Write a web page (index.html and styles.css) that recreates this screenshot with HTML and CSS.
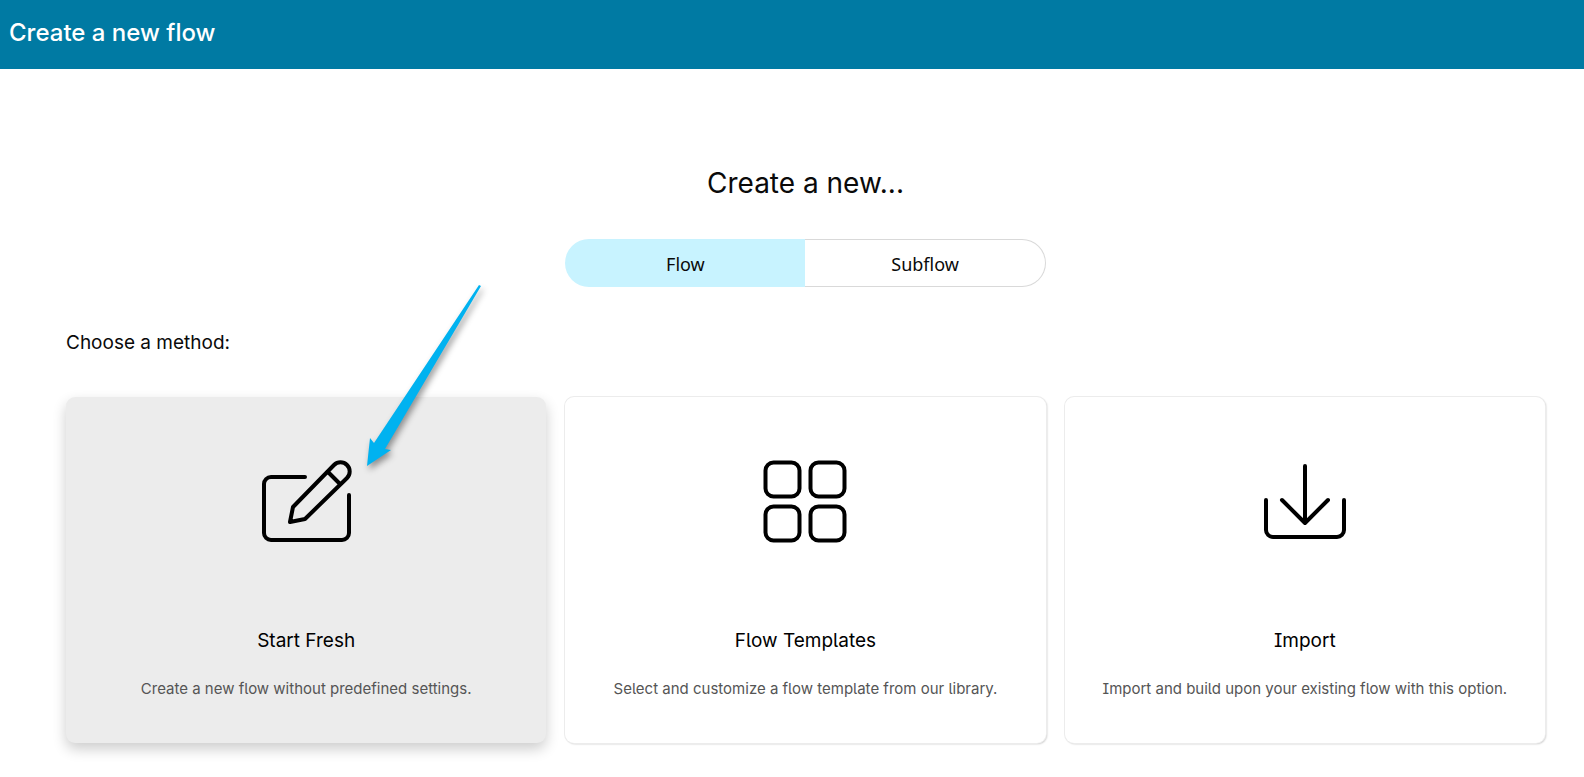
FILE: index.html
```html
<!DOCTYPE html>
<html lang="en">
<head>
<meta charset="utf-8">
<title>Create a new flow</title>
<link rel="stylesheet" href="styles.css">
</head>
<body>
<header class="topbar"><h1 class="topbar-title">Create a new flow</h1></header>
<main class="content">
  <h2 class="heading">Create a new...</h2>
  <div class="segmented" role="group" aria-label="Flow type">
    <button class="segment segment-active" type="button" aria-pressed="true">Flow</button>
    <button class="segment" type="button" aria-pressed="false">Subflow</button>
  </div>
  <p class="prompt">Choose a method:</p>
  <div class="cards">
    <button class="card card-hover" type="button">
      <svg class="icon" viewBox="0 0 96 96" aria-hidden="true">
        <path d="M47 22H13a7 7 0 0 0-7 7V78a7 7 0 0 0 7 7H84a7 7 0 0 0 7-7V40"/>
        <path d="M32 67 35 52 76 10a9 9 0 0 1 13 13L47 64ZM70 17 82 29"/>
      </svg>
      <span class="card-title">Start Fresh</span>
      <span class="card-text">Create a new flow without predefined settings.</span>
      <svg class="pointer" viewBox="0 0 116 184" aria-hidden="true">
        <path d="M114 0 116 1 20 164 26 165 2 181 5 153 9 158Z"/>
      </svg>
    </button>
    <button class="card" type="button">
      <svg class="icon" viewBox="0 0 96 96" aria-hidden="true">
        <rect x="8.500" y="7.500" width="34" height="34" rx="8"/>
        <rect x="53.500" y="7.500" width="34" height="34" rx="8"/>
        <rect x="8.500" y="51.500" width="34" height="34" rx="8"/>
        <rect x="53.500" y="51.500" width="34" height="34" rx="8"/>
      </svg>
      <span class="card-title">Flow Templates</span>
      <span class="card-text">Select and customize a flow template from our library.</span>
    </button>
    <button class="card" type="button">
      <svg class="icon" viewBox="0 0 96 96" aria-hidden="true">
        <path d="M48 11V67M25 45 48 68 71 45M9 45V75a7 7 0 0 0 7 7H80a7 7 0 0 0 7-7V45"/>
      </svg>
      <span class="card-title">Import</span>
      <span class="card-text">Import and build upon your existing flow with this option.</span>
    </button>
  </div>
</main>
</body>
</html>
```
FILE: styles.css
```css
* { box-sizing: border-box; }
body {
  margin: 0;
  background: #fff;
  color: #0a0a0a;
  font-family: Inter, "Liberation Sans", sans-serif;
}
.topbar { background: #007aa3; padding: 17px 9px 20px; }
.topbar-title { margin: 0; color: #fff; font-size: 24px; line-height: 32px; font-weight: 500; }
.content {
  display: flex;
  flex-direction: column;
  padding: 94px 39px 32px 66px;
}
.heading { margin: 0; font-size: 28px; line-height: 40px; font-weight: 400; text-align: center; }
.segmented {
  display: grid;
  grid-template-columns: 1fr 1fr;
  width: calc((100% - 38px) / 3);
  height: 48px;
  margin: 36px auto 0;
}
.segment {
  padding: 2px 0 0;
  border: 1px solid #d9d9d9;
  border-left: 0;
  border-radius: 0 24px 24px 0;
  background: #fff;
  color: #0a0a0a;
  font: 18px/24px "Noto Sans", "Open Sans", sans-serif;
}
.segment-active { border: 0; border-radius: 24px 0 0 24px; background: #c8f3ff; }
.prompt { margin: 42px 0 0; font-size: 19px; line-height: 28px; }
.cards {
  display: grid;
  grid-template-columns: repeat(3, 1fr);
  gap: 19px;
  margin-top: 40px;
}
.card {
  position: relative;
  display: flex;
  flex-direction: column;
  align-items: center;
  padding: 58px 16px 42px;
  border: 0;
  border-radius: 9px;
  background: #fff;
  color: #000;
  font-family: inherit;
  font-feature-settings: "cv08" 1, "cv05" 1;
  box-shadow: 0 0 0 1px #ececec, 1px 1px 2px #0004;
}
.card-hover { background: #ececec; box-shadow: 0 6px 14px #0003; }
.icon {
  width: 96px;
  height: 96px;
  fill: none;
  stroke: #000;
  stroke-width: 4;
  stroke-linecap: round;
  stroke-linejoin: round;
}
.card-title { margin-top: 76px; font-size: 19px; line-height: 28px; }
.card-text { margin-top: 22px; color: #555; font-size: 15px; line-height: 24px; }
.pointer {
  position: absolute;
  top: -112px;
  left: 299px;
  width: 116px;
  height: 184px;
  overflow: visible;
  fill: #00b2f0;
  filter: drop-shadow(2px 4px 3px #0006);
}
```
